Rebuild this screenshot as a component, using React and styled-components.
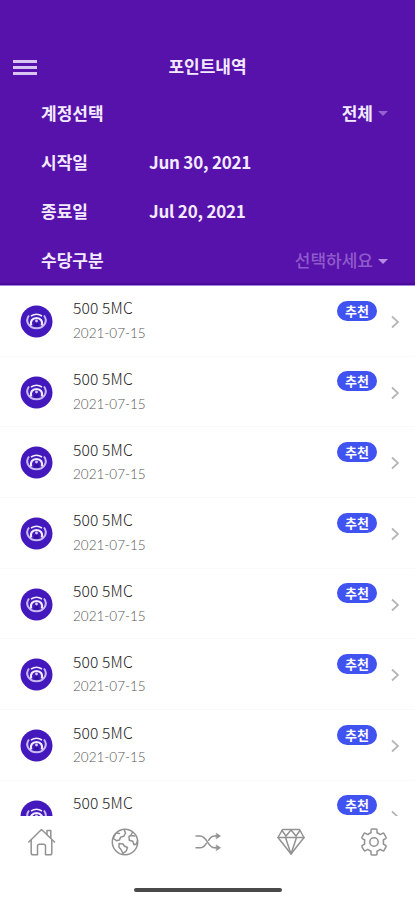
import styled, { createGlobalStyle } from "styled-components";

//------------------------------------------------------------------->

const GlobalStyle = createGlobalStyle`
  * {
    box-sizing: border-box;
  }
  body {
    margin: 0;
    background-color: #fff;
    font-family: "Noto Sans CJK KR", sans-serif;
  }
`;
const Screen = styled.div`
  display: flex;
  flex-direction: column;
  width: 415px;
  height: 900px;
  overflow: hidden;
  background-color: #fff;
`;
const Header = styled.header`
  flex: none;
  height: 286px;
  padding-top: 44px;
  background-color: #5712ab;
  border-bottom: 1px solid #a583dc;
  box-shadow: inset 0 -2px 0 #480b9b;
  color: #f3eaff;
`;
const TitleBar = styled.div`
  display: grid;
  grid-template-columns: 50px 1fr 50px;
  align-items: center;
  height: 44px;
`;
const MenuButton = styled.button`
  display: flex;
  flex-direction: column;
  gap: 3px;
  width: 24px;
  margin: 3px 0 0 13px;
  padding: 0;
  border: none;
  background: none;
`;
const MenuLine = styled.span`
  height: 3px;
  background-color: #d9c5f3;
`;
const Title = styled.h1`
  margin: 0;
  text-align: center;
  font-size: 17px;
  line-height: 24px;
  font-weight: 700;
`;
const Field = styled.div`
  display: flex;
  align-items: center;
  height: 49.2px;
  padding: 0 27px 0 41px;
  font-size: 17px;
  line-height: 24px;
  font-weight: 700;
`;
const FieldLabel = styled.span`
  width: 108px;
`;
const FieldValue = styled.span`
  letter-spacing: -0.22px;
`;
const Select = styled.span`
  display: flex;
  align-items: center;
  gap: 5px;
  margin-left: auto;
  color: ${({ $muted }) => ($muted ? "#8f5bca" : "#f3eaff")};
  font-weight: ${({ $muted }) => ($muted ? 500 : 700)};
`;
const Caret = styled.span`
  border: 5px solid transparent;
  border-top: 5px solid ${({ $muted }) => ($muted ? "#b58be4" : "#9560cf")};
  border-bottom: none;
  margin-top: 2px;
`;
const List = styled.ul`
  flex: none;
  height: 530px;
  margin: 0;
  padding: 0;
  overflow: hidden;
  list-style: none;
`;
const Item = styled.li`
  display: flex;
  align-items: flex-start;
  height: 70.7px;
  padding: 0 15px 0 20px;
  border-bottom: 1px solid #fafafa;
`;
const Avatar = styled.svg`
  flex: none;
  width: 33px;
  height: 33px;
  margin-top: 19px;
`;
const ItemText = styled.div`
  flex: 1;
  margin-left: 20px;
  padding-top: 10.4px;
`;
const Amount = styled.div`
  font-size: 15.6px;
  line-height: 22px;
  font-weight: 300;
  letter-spacing: 0.15px;
  color: #222;
`;
const DateText = styled.div`
  margin-top: 4.6px;
  font-family: Lato, "Noto Sans CJK KR", sans-serif;
  font-size: 13.5px;
  line-height: 20px;
  font-weight: 300;
  color: #555;
`;
const Badge = styled.span`
  width: 40px;
  height: 20px;
  margin-top: 14.6px;
  border-radius: 10px;
  background-color: #4052f0;
  color: #fff;
  font-size: 13px;
  line-height: 19px;
  font-weight: 700;
  text-align: center;
`;
const Chevron = styled.svg`
  flex: none;
  width: 10px;
  height: 16px;
  margin: 28px 0 0 13px;
`;
const TabBar = styled.nav`
  display: grid;
  grid-template-columns: repeat(5, 1fr);
  flex: none;
  height: 51px;
`;
const Tab = styled.button`
  display: flex;
  align-items: center;
  justify-content: center;
  padding: 0;
  border: none;
  background: none;
`;
const TabIcon = styled.svg`
  width: 28px;
  height: 28px;
  fill: none;
  stroke: #929292;
  stroke-width: 1.5;
  stroke-linecap: round;
  stroke-linejoin: round;
`;
const HomeIndicator = styled.div`
  flex: none;
  width: 148px;
  height: 4px;
  margin: 21px auto 0;
  border-radius: 2px;
  background-color: #4a4a4a;
`;
//------------------------------------------------------------------->
const items = Array.from({ length: 8 }, (_, id) => ({
  id,
  amount: "500 5MC",
  date: "2021-07-15",
  type: "추천",
}));

const tabs = [
  {
    name: "home",
    icon: (
      <>
        <path d="M.8 14 13.5 1.5 26.5 14" />
        <path d="M3.2 12.3V25q0 1.8 1.8 1.8h4.5V18q0-1.8 1.8-1.8h4.4q1.8 0 1.8 1.8v8.8H22q1.8 0 1.8-1.8V12.3" />
        <path d="M19 6.5V2.500h3.800v7.500" />
      </>
    ),
  },
  {
    name: "world",
    icon: (
      <>
        <circle cx="14" cy="14" r="12.7" />
        <path d="M4.5 5.8 2.3 10.5l3.2 2.2L8.5 12l1-2.7 3.2-1 1.8-3.3-1.2-3.3M5.5 5l3 .5" />
        <path d="M8 15.5 12 16l1.3 2 3.2 1.5-1.2 3.3-3.3 2.7-2-4L8 19.3Z" />
        <path d="M21.5 4.2 19.8 7.5l-1.800 1 .3 3.800 3.500 1 1.200 3.500 2.500-.8 1-3.500M19.800 7.500l4 .5" />
      </>
    ),
  },
  {
    name: "exchange",
    icon: (
      <>
        <path d="M2 8h4c7.5 0 7.5 11.8 14.5 11.8h3.5M2 19.8h4c3.3 0 5-2.3 6.4-4.5M14.6 12.3C16 10 17.5 8 20.5 8H24" />
        <path
          d="m22.5 5.3 4 2.7-4 2.7ZM22.5 17.1l4 2.7-4 2.7Z"
          fill="#929292"
          strokeWidth="0.6"
        />
      </>
    ),
  },
  {
    name: "gem",
    icon: (
      <>
        <path d="M5.500 1.500h17L27 9.500 14 26 1 9.500Z" />
        <path d="M1 9.500h26M5 2.500l4 5.500 5-6 5 6 4-5.500M8.500 9.500 14 26l5.500-16.500" />
      </>
    ),
  },
  {
    name: "settings",
    icon: (
      <>
        <path d="M11 2q0-1 1-1h4q1 0 1 1v2.800q1.700.6 3.200 1.800l2.300-1.300q1-.5 1.500.3l2 3.500q.5.900-.4 1.500l-2.300 1.400q.4 2 0 4l2.300 1.400q.9.600.4 1.500l-2 3.500q-.5.800-1.500.3l-2.300-1.300q-1.500 1.200-3.200 1.800V26q0 1-1 1h-4q-1 0-1-1v-2.800q-1.700-.6-3.200-1.800l-2.300 1.300q-1 .5-1.500-.3l-2-3.500q-.5-.9.400-1.500l2.300-1.400q-.4-2 0-4L2.400 10.600q-.9-.6-.4-1.500l2-3.500q.5-.8 1.500-.3l2.300 1.300Q9.300 5.400 11 4.800Z" />
        <circle cx="14" cy="14" r="4.2" />
      </>
    ),
  },
];

function AvatarIcon() {
  return (
    <Avatar viewBox="0 0 33 33" fill="none">
      <circle cx="16.5" cy="16.5" r="16" fill="#4318bd" />
      <path
        d="M9 10.500q-3 4-1 8 2.500 4.800 8.500 4.800t8.500-4.800q2-4-1-8"
        stroke="#c9bbf2"
        strokeWidth="2"
      />
      <path d="M11 11q5.500-3.500 11 0" stroke="#f3eeff" strokeWidth="1.600" />
      <path
        d="M11.200 20.500c-1.200-4.500 1-7.500 5.300-7.500s6.500 3 5.300 7.500"
        stroke="#f3eeff"
        strokeWidth="2.200"
      />
      <path d="m13.800 21.500 1.500-4h2.400l1.500 4Z" fill="#34109f" />
      <circle cx="16.5" cy="16" r="1.400" fill="#d8cbfa" />
    </Avatar>
  );
}

function App() {
  return (
    <>
      <GlobalStyle />
      <Screen>
        <Header>
          <TitleBar>
            <MenuButton>
              <MenuLine />
              <MenuLine />
              <MenuLine />
            </MenuButton>
            <Title>포인트내역</Title>
          </TitleBar>
          <Field>
            <FieldLabel>계정선택</FieldLabel>
            <Select>
              전체
              <Caret />
            </Select>
          </Field>
          <Field>
            <FieldLabel>시작일</FieldLabel>
            <FieldValue>Jun 30, 2021</FieldValue>
          </Field>
          <Field>
            <FieldLabel>종료일</FieldLabel>
            <FieldValue>Jul 20, 2021</FieldValue>
          </Field>
          <Field>
            <FieldLabel>수당구분</FieldLabel>
            <Select $muted>
              선택하세요
              <Caret $muted />
            </Select>
          </Field>
        </Header>
        <List>
          {items.map((item) => (
            <Item key={item.id}>
              <AvatarIcon />
              <ItemText>
                <Amount>{item.amount}</Amount>
                <DateText>{item.date}</DateText>
              </ItemText>
              <Badge>{item.type}</Badge>
              <Chevron viewBox="0 0 10 16">
                <path
                  d="m2 2.5 6 5.5-6 5.5"
                  fill="none"
                  stroke="#b5b5b5"
                  strokeWidth="1.7"
                />
              </Chevron>
            </Item>
          ))}
        </List>
        <TabBar>
          {tabs.map(({ name, icon }) => (
            <Tab key={name}>
              <TabIcon viewBox="0 0 28 28">{icon}</TabIcon>
            </Tab>
          ))}
        </TabBar>
        <HomeIndicator />
      </Screen>
    </>
  );
}

export default App;
